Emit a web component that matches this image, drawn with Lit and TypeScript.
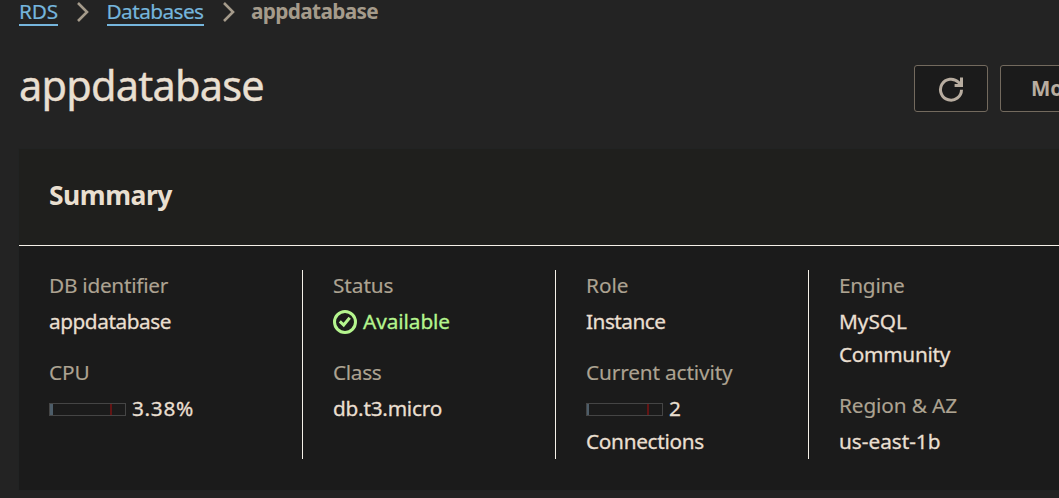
import { LitElement, html, css, svg } from "lit";
import { customElement, property } from "lit/decorators.js";

/** Single-line text whose tracking is adjusted to fill a given advance width. */
@customElement("fit-text")
class FitText extends LitElement {
  @property() text = "";
  @property({ type: Number }) span = 0;

  static styles = css`
    :host { display: inline-block; white-space: nowrap; }
  `;

  updated() {
    const el = this.renderRoot.querySelector("span") as HTMLElement;
    el.style.letterSpacing = "normal";
    const natural = el.getBoundingClientRect().width;
    el.style.letterSpacing = `${(this.span - natural) / this.text.length}px`;
  }

  render() {
    return html`<span>${this.text}</span>`;
  }
}

@customElement("usage-meter")
class UsageMeter extends LitElement {
  @property({ type: Number }) fill = 3;

  static styles = css`
    :host { display: block; flex: none; width: 77px; height: 13px; }
    .meter { box-sizing: border-box; display: flex; height: 13px; border: 1px solid #454545; }
    .used { background: #4d5d69; }
    .gap { flex: 1; }
    .limit { width: 2px; margin-right: 13px; background: #631414; }
  `;

  render() {
    return html`<div class="meter">
      <div class="used" style="width:${this.fill}px"></div>
      <div class="gap"></div>
      <div class="limit"></div>
    </div>`;
  }
}

type Line = { text: string; span: number; meter?: number; ok?: boolean };
type Field = { label: string; span: number; lines: Line[] };

const columns: Field[][] = [
  [
    { label: "DB identifier", span: 119, lines: [{ text: "appdatabase", span: 122 }] },
    { label: "CPU", span: 40.5, lines: [{ text: "3.38%", span: 62, meter: 3 }] },
  ],
  [
    { label: "Status", span: 60.5, lines: [{ text: "Available", span: 87, ok: true }] },
    { label: "Class", span: 48.5, lines: [{ text: "db.t3.micro", span: 109 }] },
  ],
  [
    { label: "Role", span: 42.5, lines: [{ text: "Instance", span: 79.5 }] },
    {
      label: "Current activity",
      span: 146.5,
      lines: [{ text: "2", span: 12, meter: 2 }, { text: "Connections", span: 118 }],
    },
  ],
  [
    { label: "Engine", span: 65.5, lines: [{ text: "MySQL", span: 68 }, { text: "Community", span: 111 }] },
    { label: "Region & AZ", span: 118, lines: [{ text: "us-east-1b", span: 101.5 }] },
  ],
];

const chevron = html`<svg class="chevron" width="12" height="20" viewBox="0 0 12 20">
  ${svg`<path d="M1 1 L10 10 L1 19" fill="none" stroke="#a59b8b" stroke-width="2.6"/>`}
</svg>`;

@customElement("app-root")
class AppRoot extends LitElement {
  static styles = css`
    :host {
      display: block;
      width: 100%;
      height: 498px;
      overflow: hidden;
      background: #232323;
      color: #e9dfd0;
      font: 20.8px/33px "Noto Sans", "Open Sans", sans-serif;
    }
    .page { display: flex; flex-direction: column; padding-left: 19px; height: 498px; }
    .crumbs { display: flex; height: 29px; line-height: 22px; }
    .link {
      box-sizing: border-box;
      height: 26px;
      border-bottom: 2px solid #75b5dc;
      color: #75b5dc;
      -webkit-text-stroke: 0.2px currentColor;
    }
    .chevron { display: block; flex: none; margin: 2px 17.5px 0 19px; }
    .current { font-weight: 700; color: #a59b8b; margin-left: -1px; }
    .titlebar { display: flex; height: 47px; margin-top: 36px; }
    .title {
      flex: 1;
      margin: 0;
      font-size: 41.5px;
      font-weight: 400;
      line-height: 41px;
      -webkit-text-stroke: 0.4px currentColor;
    }
    .actions { display: flex; flex: none; gap: 12px; width: 145px; }
    .button {
      box-sizing: border-box;
      display: flex;
      flex: none;
      align-items: center;
      height: 47px;
      padding: 0 30px;
      border: 1px solid #736a5e;
      border-radius: 3px;
      background: #1b1b1b;
      color: #b8ada0;
      font: 700 20.5px/33px "Noto Sans", sans-serif;
      white-space: nowrap;
    }
    .square { width: 74px; padding: 0; justify-content: center; }
    .panel {
      display: flex;
      flex-direction: column;
      height: 341px;
      margin-top: 37px;
      background: #1b1b1b;
      border-top-left-radius: 2px;
      box-shadow: 0 0 1px #16292b;
    }
    .heading {
      box-sizing: border-box;
      height: 97px;
      padding: 29px 30px;
      border-bottom: 1px solid #f5f0e8;
      background: #1f1f1d;
    }
    .summary { margin: 0; font-size: 26.5px; font-weight: 700; line-height: 35px; }
    .columns { display: grid; grid-template-columns: 283px 253px 253px 1fr; margin-top: 24px; }
    .column {
      box-sizing: border-box;
      display: flex;
      flex-direction: column;
      gap: 18px;
      height: 189px;
      padding-left: 30px;
      border-left: 1px solid #f5f0e8;
    }
    .column:first-child { border-left: 0; }
    .label {
      height: 33px;
      margin-bottom: 3px;
      color: #ada392;
      line-height: 31px;
      -webkit-text-stroke: 0.15px currentColor;
    }
    .line {
      display: flex;
      align-items: center;
      height: 33px;
      gap: 6px;
      -webkit-text-stroke: 0.3px currentColor;
    }
    .line fit-text { height: 33px; line-height: 31px; }
    .ok { color: #b5f58e; }
    .icon { display: block; flex: none; }
    .line .icon { margin-bottom: 1px; }
  `;

  private line(l: Line) {
    return html`<div class="line ${l.ok ? "ok" : ""}">
      ${l.meter ? html`<usage-meter .fill=${l.meter}></usage-meter>` : ""}
      ${l.ok
        ? html`<svg class="icon" width="24" height="24" viewBox="0 0 24 24" fill="none" stroke="#b5f58e" stroke-width="3">
            <circle cx="12" cy="12" r="10.5" /><path d="M6.8 11.3 L10.7 15 L16.7 7.7" />
          </svg>`
        : ""}
      <fit-text .text=${l.text} .span=${l.span}></fit-text>
    </div>`;
  }

  render() {
    return html`<div class="page">
      <nav class="crumbs">
        <div class="link"><fit-text .text=${"RDS"} .span=${39}></fit-text></div>
        ${chevron}
        <div class="link"><fit-text .text=${"Databases"} .span=${97}></fit-text></div>
        ${chevron}
        <div class="current"><fit-text .text=${"appdatabase"} .span=${127}></fit-text></div>
      </nav>
      <header class="titlebar">
        <h1 class="title"><fit-text .text=${"appdatabase"} .span=${245}></fit-text></h1>
        <div class="actions">
          <button class="button square" aria-label="Refresh">
            <svg class="icon" width="26" height="26" viewBox="0 0 26 26" fill="none" stroke="#b8ada0" stroke-width="3">
              <path d="M23.5 13.7 A10.5 10.5 0 1 1 20.5 6.3 L23 9" />
              <path d="M23.5 1.6 V9.6 H16.6" />
            </svg>
          </button>
          <button class="button">Modify</button>
        </div>
      </header>
      <section class="panel">
        <div class="heading"><h2 class="summary"><fit-text .text=${"Summary"} .span=${123}></fit-text></h2></div>
        <div class="columns">
          ${columns.map((c) => html`<div class="column">
            ${c.map((f) => html`<div>
              <div class="label"><fit-text .text=${f.label} .span=${f.span}></fit-text></div>
              ${f.lines.map((l) => this.line(l))}
            </div>`)}
          </div>`)}
        </div>
      </section>
    </div>`;
  }
}
